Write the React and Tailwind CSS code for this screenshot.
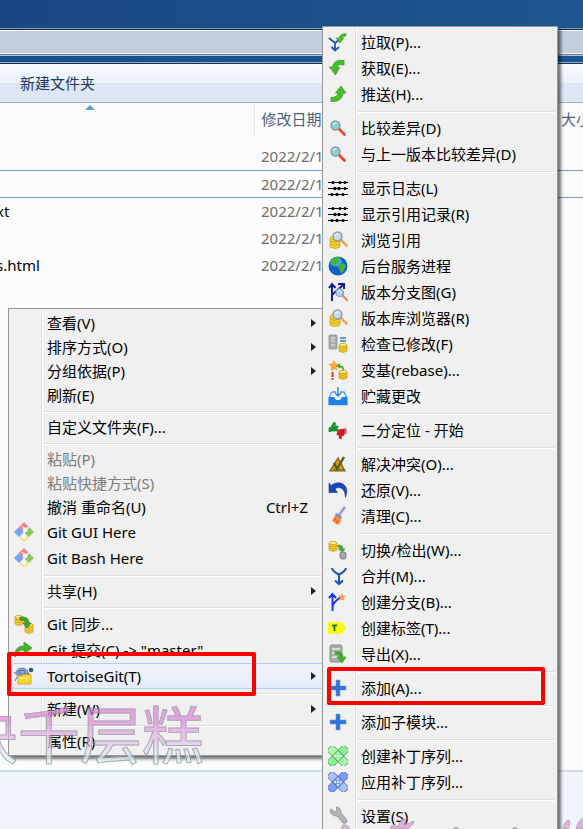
import React from "react";

const yellow = "#f7cf2c";

function Cylinder({ x, y, w = 8, h = 9 }) {
  return (
    <g fill={yellow} stroke="#c49a16" strokeWidth="0.7">
      <path d={`M${x} ${y}v${h}q${w / 2} 3 ${w} 0v-${h}z`} />
      <ellipse cx={x + w / 2} cy={y} rx={w / 2} ry="1.6" fill="#fdea7a" />
      <path d={`M${x} ${y + h / 3}q${w / 2} 3 ${w} 0M${x} ${y + (2 * h) / 3}q${w / 2} 3 ${w} 0`} fill="none" />
    </g>
  );
}

function Glass({ x = 0, y = 0, handle = "#e5a862", lens = "#c8dcec" }) {
  return (
    <g transform={`translate(${x} ${y})`}>
      <path d="M8.5 8.5l6 6" stroke={handle} strokeWidth="2.6" strokeLinecap="round" />
      <circle cx="5.5" cy="5.5" r="4.4" fill={lens} stroke="#8d9aa3" strokeWidth="1.5" />
      <path d="M3 5q1-2.300 3.500-2.300" stroke="#fff" strokeWidth="1" fill="none" />
    </g>
  );
}

function Patch({ a, b, line }) {
  return (
    <g stroke={line} strokeWidth="0.8">
      <rect x="-2" y="6" width="24" height="8" rx="2" fill={a} transform="rotate(-45 10 10)" />
      <rect x="-2" y="6" width="24" height="8" rx="2" fill={b} transform="rotate(45 10 10)" />
      <rect x="6" y="6" width="8" height="8" fill={a} transform="rotate(45 10 10)" />
      <g fill="#fff" stroke="none">
        <circle cx="10" cy="7" r="1" />
        <circle cx="7" cy="10" r="1" />
        <circle cx="13" cy="10" r="1" />
        <circle cx="10" cy="13" r="1" />
        <circle cx="10" cy="10" r="1" />
      </g>
    </g>
  );
}

const sliders = (
  <g stroke="#000" strokeWidth="1.2" fill="#000">
    <path d="M0 4.500h20M0 10.500h20M0 16.500h20" />
    <g stroke="none">
      <circle cx="5" cy="4.500" r="1.500" />
      <circle cx="12" cy="4.500" r="1.500" />
      <circle cx="17" cy="4.500" r="1.500" />
      <circle cx="7" cy="10.500" r="1.700" />
      <circle cx="11" cy="10.500" r="1.700" />
      <circle cx="17" cy="10.500" r="1.500" />
      <circle cx="4" cy="16.500" r="1.500" />
      <circle cx="9" cy="16.500" r="1.700" />
      <circle cx="15" cy="16.500" r="1.500" />
    </g>
  </g>
);

const search = <Glass x={2} y={2} handle="#e8402c" lens="#8fd0cf" />;

const browse = (
  <g>
    <Cylinder x={2} y={8} w={10} h={9} />
    <Glass x={4} y={1} />
  </g>
);

const plus = (
  <path d="M8 2h4v6h6v4h-6v6H8v-6H2V8h6z" fill="#2f74d8" stroke="#6f9fe4" strokeWidth="0.6" />
);

const gitMark = (
  <g>
    <path d="M5 5l4.500 4.500v1L5 15l-5-5z" fill="#72a4f7" />
    <path d="M10 0l4.500 4.500-3 1.500-1.500-1.500-1.500 5L5 5z" fill="#f58086" />
    <path d="M15 5l5 5-5 5-4.500-4.500 2.500-1.500z" fill="#86c862" />
    <path d="M10 11l5 4.500-5 4.500-5-4.500 2-1.500 2.500 2 2.500-2z" fill="#fbe08a" />
    <path d="M8 4l5 6M10 7v8" stroke="#fff" strokeWidth="1" />
    <circle cx="10" cy="15.500" r="1.500" fill="#fff" />
  </g>
);

const art = {
  pull: (
    <g>
      <path d="M1 6l6 5v7M3.500 15L7 18.500 11 15M7 11l4-3" stroke="#1f55b8" strokeWidth="1.8" fill="none" />
      <path d="M18 1.500q-6 0-7 4.500H8l4 5 4-5h-2q1-2 4-2z" fill="#39c521" stroke="#5a9e46" strokeWidth="0.7" />
    </g>
  ),
  fetch: (
    <path d="M16 2.500Q6 1 4.500 9H1.500l6 8 4-7.500H9Q10 5.500 16 7z" fill="#3cc51e" stroke="#5d8f4e" strokeWidth="0.9" />
  ),
  push: (
    <path d="M3 17.500q11 1 12-8.500h3l-5-7-5.500 7H10q-.5 4.500-7 4.500z" fill="#3cc51e" stroke="#5d8f4e" strokeWidth="0.9" />
  ),
  search,
  log: sliders,
  browse,
  globe: (
    <g>
      <circle cx="10" cy="10" r="9.500" fill="#0c62c4" />
      <ellipse cx="8" cy="6" rx="6" ry="4.500" fill="#45a6ef" />
      <path d="M3 4q4-3.500 8-3l2 2-3 2-1 3-3 2-3-2zM11 9l5-2 2 3-2 4-3 4-1-4-2-3z" fill="#48b42b" />
    </g>
  ),
  graph: (
    <g fill="none" stroke="#151b93" strokeWidth="2">
      <path d="M4 19V3M1 6l3-4 3.500 4M4 13L15 3M10 2h6v5" />
      <g stroke="none">
        <g transform="translate(7 6) scale(.85)">
          <Glass lens="#a8d8f6" handle="#f08544" />
        </g>
      </g>
    </g>
  ),
  check: (
    <g>
      <rect x="1" y="1" width="8" height="14" rx="1" fill="#a9aeb2" stroke="#858b90" strokeWidth="0.7" />
      <path d="M3 4h4M3 7h4M3 11h4" stroke="#eee" />
      <path d="M12 4h6M12 7h6" stroke="#2c7fb5" strokeWidth="1.6" />
      <Cylinder x={11} y={11} w={8} h={6} />
    </g>
  ),
  rebase: (
    <g>
      <path d="M6 0l1.700 3.500 4 .5-3 2.800.8 3.900L6 9 2.500 10.700l.8-3.900-3-2.800 4-.5z" fill="#fda72c" />
      <path d="M4.500 12v5M4.500 18v2" stroke="#f32525" strokeWidth="1.9" />
      <path d="M15 10q1-4-5-4l2-2M10 6l2 2" stroke="#3aa532" strokeWidth="1.700" fill="none" />
      <Cylinder x={11} y={12} w={8} h={6} />
    </g>
  ),
  stash: (
    <g>
      <path d="M4 6L1 12v6.500h18V12l-3-6h-4M8 6H4" fill="none" stroke="#5298e6" strokeWidth="1.300" />
      <path d="M1 11h5l2 3h4l2-3h5v8H1z" fill="#1f82eb" />
      <path d="M10 1v9M7 7l3 3 3-3" stroke="#2787e8" strokeWidth="1.500" fill="none" />
    </g>
  ),
  bisect: (
    <g>
      <path d="M1 8l2-1 3-5 1.500 1L7 6h3l-1 5H4l-3 1z" fill="#149a2c" stroke="#0c741e" strokeWidth="0.6" />
      <path d="M10 10l6-1v6l-2 1-1 3-2-1 .5-3H9z" fill="#d91626" stroke="#a00c18" strokeWidth="0.6" />
      <path d="M16 8l2.500 1v5L16 14z" fill="#e84250" />
    </g>
  ),
  resolve: (
    <g>
      <path d="M10 4l7 13H2z" fill="#e59a1c" stroke="#77601c" strokeWidth="1.200" />
      <path d="M6 9l3 6 7-12" stroke="#4a6118" strokeWidth="2.400" fill="none" />
      <path d="M5 16h11" stroke="#6e6a1b" strokeWidth="1.400" />
    </g>
  ),
  revert: (
    <path d="M1 3l2 2.500Q9 1 15 4q6 4 2.500 13.500Q17 9.500 13 8q-4-1.500-6 1l2.500 3.500H1z" fill="#1947b7" stroke="#123591" strokeWidth="0.6" />
  ),
  clean: (
    <g>
      <path d="M16.500 1.500L11 9" stroke="#a593f0" strokeWidth="2.600" strokeLinecap="round" />
      <path d="M8 7l6 4-1 2-6-4z" fill="#6a82e8" />
      <path d="M7 9l6 4q0 4-3 6-4-2-6-5 2-1 3-5z" fill="#fb8d35" />
      <path d="M8 12l-2 3M10 14l-1.500 3" stroke="#ef4d2c" />
    </g>
  ),
  swap: (
    <g>
      <Cylinder x={1} y={3} w={8} h={7} />
      <path d="M10 5q5 0 5 4h2l-3 3-3.500-3H12q0-2-2-2z" fill="#4ba83d" stroke="#39822f" strokeWidth="0.600" />
      <rect x="12" y="12" width="6" height="7" rx="2" fill="#a6aaa6" stroke="#6d706d" strokeWidth="0.800" />
    </g>
  ),
  merge: (
    <path d="M4 2q1 4 7 6.500Q17 6 18 2M11 8v10M7 14.500l4 3.500 4-3.500" stroke="#1d57b5" strokeWidth="2.100" fill="none" />
  ),
  branch: (
    <g>
      <path d="M4.500 19V3M1 6l3.500-4L8 6M4.500 15Q5 10 13 5" stroke="#1731f1" strokeWidth="1.900" fill="none" />
      <path d="M14 1l1.200 2.500 2.800.4-2 2 .5 2.900L14 7.500l-2.500 1.300.5-2.900-2-2 2.800-.4z" fill="#f6a050" />
    </g>
  ),
  tag: (
    <g>
      <path d="M0 4h14l4 6-4 6H0z" fill="#fdfb11" />
      <path d="M4 7.500h5M6.500 7v6" stroke="#2c7b12" strokeWidth="1.800" />
    </g>
  ),
  export: (
    <g>
      <rect x="2" y="1" width="12" height="17" rx="1.500" fill="#a4b0a7" stroke="#788379" strokeWidth="0.800" />
      <path d="M4 5h8M4 9h8M4 13h5" stroke="#e7eee7" strokeWidth="1.300" />
      <path d="M7 8q8-1 8 5h3l-4 6-5-6h3q0-3-5-3z" fill="#34b51d" stroke="#4f8d43" strokeWidth="0.700" />
    </g>
  ),
  plus,
  patchGreen: <Patch a="#8af391" b="#a9f5ae" line="#479a4d" />,
  patchBlue: <Patch a="#7b9ef8" b="#a9c0fb" line="#4a62a5" />,
  wrench: (
    <path d="M3 3l4 3 2-2-1-3q5 0 5 6l6 7q0 4-4 3l-6-7Q3 10 2 5z" fill="#b3b3b3" stroke="#8f8f8f" strokeWidth="0.800" />
  ),
  git: gitMark,
  sync: (
    <g>
      <Cylinder x={1} y={3} w={8} h={7} />
      <Cylinder x={11} y={11} w={8} h={7} />
      <path d="M6 3q9-1 9 6h2l-4 5-4-5h2q0-3-5-3z" fill="#3fa72b" stroke="#2f7d22" strokeWidth="0.700" />
    </g>
  ),
  commit: (
    <path d="M1 17q-1-11 9-11V2l8 6-8 6v-4q-6-1-9 7z" fill="#3cb822" stroke="#5c8f50" strokeWidth="0.900" />
  ),
  tortoise: (
    <g>
      <ellipse cx="8" cy="7" rx="6" ry="5" fill="#91a6dc" stroke="#60719f" strokeWidth="0.800" />
      <path d="M5 5l3-1 3 1v3H5zM2 8L0 6M3 11l-2 4" stroke="#4c6ea0" strokeWidth="1" fill="none" />
      <circle cx="17" cy="4" r="2.300" fill="#2f5e78" />
      <path d="M15 7l-2 2" stroke="#3b6c88" strokeWidth="1.500" />
      <path d="M4 10h4l1.500-1.500H17V18H4z" fill="#fbd52c" stroke="#cfa61b" strokeWidth="0.800" />
      <path d="M5 12h11" stroke="#fff0a0" />
    </g>
  ),
};

function Icon({ name }) {
  return (
    <span className="w-5 h-5 shrink-0">
      {name && (
        <svg viewBox="0 0 20 20" className="w-5 h-5" fill="none" aria-hidden="true">
          {art[name]}
        </svg>
      )}
    </span>
  );
}

function MenuItem({ icon, label, tall, active, disabled, shortcut, submenu }) {
  return (
    <li className="px-0.5">
      <button
        type="button"
        disabled={disabled}
        className={`flex w-full items-center gap-[13px] rounded-sm border pl-0.5 pr-2.5 text-left whitespace-nowrap ${
          tall ? "h-[26px]" : "h-6"
        } ${active ? "border-[#aecff7] bg-linear-to-b from-[#f1f4f9] to-[#e5ebf7]" : "border-transparent"} ${
          disabled ? "text-[#7d7d7d]" : "text-black"
        }`}
      >
        <Icon name={icon} />
        <span className="flex-1">{label}</span>
        {shortcut && <span className="pr-2">{shortcut}</span>}
        {submenu && (
          <svg viewBox="0 0 5 8" className="h-2 w-[5px]" aria-hidden="true">
            <path d="M0 0l5 4-5 4z" fill="#222" />
          </svg>
        )}
      </button>
    </li>
  );
}

function Menu({ label, items, className }) {
  return (
    <ul
      aria-label={label}
      className={`absolute border border-[#979797] bg-[linear-gradient(90deg,#f1f1f1_32px,#e0e0e0_32px_33px,#ffffff_33px_34px,#f0f0f0_34px)] py-0.5 shadow-[3px_3px_3px_rgba(0,0,0,0.55)] ${className}`}
    >
      {items.map((item, i) =>
        item === "-" ? (
          <li key={i} role="separator" className="ml-[34px] mr-0.5 h-2 pt-1">
            <div className="h-0.5 border-t border-[#e0e0e0] bg-white" />
          </li>
        ) : (
          <MenuItem key={i} {...item} />
        ),
      )}
    </ul>
  );
}

const folderMenu = [
  { label: "查看(V)", submenu: true },
  { label: "排序方式(O)", submenu: true },
  { label: "分组依据(P)", submenu: true },
  { label: "刷新(E)" },
  "-",
  { label: "自定义文件夹(F)..." },
  "-",
  { label: "粘贴(P)", disabled: true },
  { label: "粘贴快捷方式(S)", disabled: true },
  { label: "撤消 重命名(U)", shortcut: "Ctrl+Z" },
  { label: "Git GUI Here", icon: "git", tall: true },
  { label: "Git Bash Here", icon: "git", tall: true },
  "-",
  { label: "共享(H)", submenu: true },
  "-",
  { label: "Git 同步...", icon: "sync", tall: true },
  { label: 'Git 提交(C) -> "master"...', icon: "commit", tall: true },
  { label: "TortoiseGit(T)", icon: "tortoise", tall: true, submenu: true, active: true },
  "-",
  { label: "新建(W)", submenu: true },
  "-",
  { label: "属性(R)" },
];

const gitMenu = [
  ["pull", "拉取(P)..."],
  ["fetch", "获取(E)..."],
  ["push", "推送(H)..."],
  "-",
  ["search", "比较差异(D)"],
  ["search", "与上一版本比较差异(D)"],
  "-",
  ["log", "显示日志(L)"],
  ["log", "显示引用记录(R)"],
  ["browse", "浏览引用"],
  ["globe", "后台服务进程"],
  ["graph", "版本分支图(G)"],
  ["browse", "版本库浏览器(R)"],
  ["check", "检查已修改(F)"],
  ["rebase", "变基(rebase)..."],
  ["stash", "贮藏更改"],
  "-",
  ["bisect", "二分定位 - 开始"],
  "-",
  ["resolve", "解决冲突(O)..."],
  ["revert", "还原(V)..."],
  ["clean", "清理(C)..."],
  "-",
  ["swap", "切换/检出(W)..."],
  ["merge", "合并(M)..."],
  ["branch", "创建分支(B)..."],
  ["tag", "创建标签(T)..."],
  ["export", "导出(X)..."],
  "-",
  ["plus", "添加(A)..."],
  "-",
  ["plus", "添加子模块..."],
  "-",
  ["patchGreen", "创建补丁序列..."],
  ["patchBlue", "应用补丁序列..."],
  "-",
  ["wrench", "设置(S)"],
].map((row) => (row === "-" ? row : { icon: row[0], label: row[1], tall: true }));

const files = [
  { name: "", date: "2022/2/1" },
  { name: "", date: "2022/2/1", selected: true },
  { name: "xt", date: "2022/2/1" },
  { name: "", date: "2022/2/1" },
  { name: "s.html", date: "2022/2/1" },
];

function Explorer() {
  return (
    <div className="flex h-full flex-col">
      <div className="h-7 shrink-0 bg-linear-to-r from-[#1a4783] to-[#1d5690]" />
      <div className="h-7 shrink-0 border-t border-[#7c9cc0] border-b border-b-[#a5bdd6] bg-[#6b819b]">
        <div className="h-[26px] border-t border-[#1d2c40]">
          <div className="h-6 border-y border-[#f2f6fa] bg-[#c0cede]" />
        </div>
      </div>
      <div className="h-1.5 shrink-0 bg-linear-to-r from-[#1a4c8c] to-[#1b5690]" />
      <div className="shrink-0 border-t border-[#8fb0d4]">
        <div className="flex h-10 items-center border-t border-t-[#1c2f4a] border-b border-b-[#a0afc6] bg-[linear-gradient(#fafdff,#e9f1fa_50%,#dce6f4_50%,#dde7f5)] pl-5">
          <button type="button" className="text-[#1e395b]">新建文件夹</button>
        </div>
      </div>
      <main className="min-h-0 flex-1 bg-[#fcfcfc]">
        <table className="w-full table-fixed border-collapse">
          <colgroup>
            <col className="w-[254px]" />
            <col className="w-[300px]" />
            <col />
          </colgroup>
          <thead>
            <tr className="h-8 text-left text-[#4c607a]">
              <th className="border-r border-[#e0e8f2] p-0 align-top font-normal" aria-label="名称">
                <svg viewBox="0 0 10 5" className="ml-[85px] mt-0.5 h-[5px] w-2.5" aria-hidden="true">
                  <path d="M5 0l5 5H0z" fill="#5ba0c2" />
                </svg>
              </th>
              <th className="p-0 pl-[7px] font-normal">修改日期</th>
              <th className="p-0 pl-[7px] font-normal whitespace-nowrap">大小</th>
            </tr>
          </thead>
          <tbody>
            <tr className="h-2" aria-hidden="true">
              <td colSpan={3} className="p-0" />
            </tr>
            {files.map((file, i) => (
              <tr key={i} className={`h-[27px] ${file.selected ? "border-y border-[#6d9ccf]" : ""}`}>
                <td className="p-0 text-black">
                  <div className="-ml-1 flex h-6 items-center">{file.name}</div>
                </td>
                <td className="p-0 pl-[7px] text-[#6d6d6d]">{file.date}</td>
                <td className="p-0" />
              </tr>
            ))}
          </tbody>
        </table>
      </main>
      <footer className="h-[59px] shrink-0 border-t-2 border-[#cddcec] bg-[#f1f5fc]" />
    </div>
  );
}

function Watermark() {
  return (
    <div
      aria-hidden="true"
      className="pointer-events-none absolute -left-11 top-[698px] flex gap-0 bg-linear-to-b from-[#e283dc] from-30% to-[#dcfbf5] to-85% bg-clip-text text-[62px] leading-[74px] text-transparent opacity-70 [-webkit-text-stroke:1px_#8b8b96]"
    >
      <span>块</span>
      <span>千</span>
      <span>层</span>
      <span>糕</span>
    </div>
  );
}

function WatermarkTops() {
  return (
    <svg
      viewBox="0 0 245 12"
      className="pointer-events-none absolute bottom-0 left-[338px] h-3 w-[245px]"
      fill="#d9a3d4"
      fillOpacity="0.8"
      stroke="#a58aa8"
      strokeWidth="0.7"
      aria-hidden="true"
    >
      <path d="M4 12q-1-5 3-4 5 1 5 6zM53 12v-3h8q1-7 5-7 3 1 0 5 5 1 9-3 2 0 0 3l-5 5zM115 12q3-3 6 0zM174 12q3-3 6 0zM225 12q2-9 6-9 2 2-1 9zM238 12q3-11 9-11v11z" />
    </svg>
  );
}

export default function App() {
  return (
    <div className="relative h-screen overflow-hidden bg-[#fcfcfc] font-['Noto_Sans','Noto_Sans_CJK_SC',sans-serif] text-[15px] leading-5">
      <Explorer />
      <Menu label="文件夹菜单" items={folderMenu} className="left-2 top-[308px] w-[322px]" />
      <Watermark />
      <Menu label="TortoiseGit" items={gitMenu} className="left-[322px] top-[26px] w-[236px]" />
      <WatermarkTops />
      <div className="pointer-events-none absolute left-[7px] top-[652px] h-11 w-[249px] rounded-xs border-4 border-[#fe0000]" />
      <div className="pointer-events-none absolute left-[327px] top-[667px] h-[38px] w-[218px] rounded-xs border-4 border-[#fe0000]" />
    </div>
  );
}
